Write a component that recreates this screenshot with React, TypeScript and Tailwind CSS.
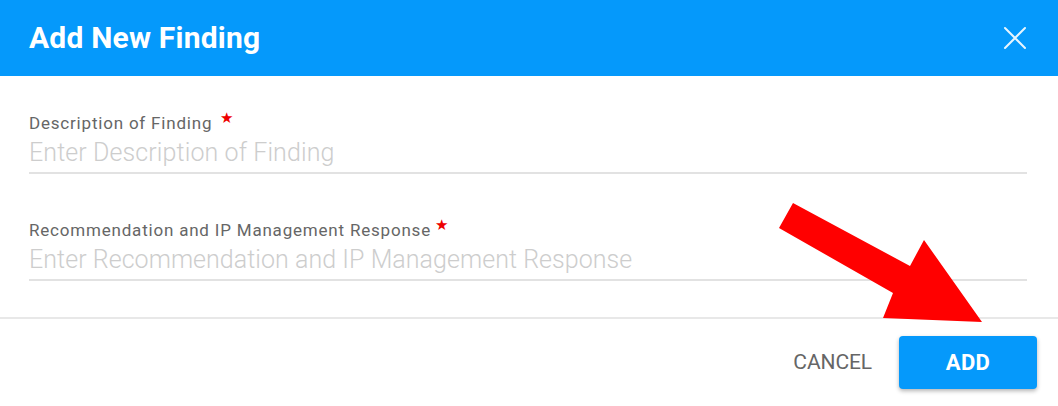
import React from "react";

export default function App() {
  return (
    <div className="relative w-[1058px] h-[406px] bg-white overflow-hidden" style={{ fontFamily: "Roboto, 'Liberation Sans', sans-serif" }}>
      <div className="h-[76px] bg-[#0599fb] flex items-center justify-between pl-[29px] pr-[31px]">
        <h1 className="text-[30px] font-bold text-white tracking-[0.2px] leading-none">Add New Finding</h1>
        <svg width="24" height="24" viewBox="0 0 24 24" className="text-white/90">
          <path d="M2 2 L22 22 M22 2 L2 22" stroke="currentColor" strokeWidth="2" strokeLinecap="round" />
        </svg>
      </div>
      <div className="pl-[29px] pr-[31px]">
        <div className="pt-[37px]">
          <div className="flex items-start h-[20px]">
            <span className="text-[17px] leading-[20px] text-[#666] tracking-[0.8px]">Description of Finding</span>
            <span className="ml-[8px] -mt-[2px] text-[#e00] text-[15px] leading-[14px]">★</span>
          </div>
          <div className="pt-[5px] pb-[4px] border-b-2 border-[#e2e2e2]">
            <div className="text-[25px] leading-[30px] font-light text-[#cdcdcd] tracking-[0.1px]">Enter Description of Finding</div>
          </div>
        </div>
        <div className="pt-[46px]">
          <div className="flex items-start h-[20px]">
            <span className="text-[17px] leading-[20px] text-[#666] tracking-[0.8px]">Recommendation and IP Management Response</span>
            <span className="ml-[4px] -mt-[2px] text-[#e00] text-[15px] leading-[14px]">★</span>
          </div>
          <div className="pt-[5px] pb-[4px] border-b-2 border-[#e2e2e2]">
            <div className="text-[25px] leading-[30px] font-light text-[#cdcdcd] tracking-[0.05px]">Enter Recommendation and IP Management Response</div>
          </div>
        </div>
      </div>
      <div className="mt-[36px] border-t-2 border-[#e8e8e8] flex justify-end items-center pt-[17px] pr-[21px] gap-[27px]">
        <span className="text-[21px] text-[#666] tracking-[-0.1px]">CANCEL</span>
        <button className="w-[138px] h-[53px] rounded-[4px] bg-[#0599fb] text-white font-bold text-[22px] tracking-[0.3px] shadow-[0_2px_4px_rgba(0,0,0,0.3)]">ADD</button>
      </div>
      <svg className="absolute left-0 top-0 pointer-events-none" width="1058" height="406">
        <polygon points="793,203 910,266 924,240 982,322 883,318 893,293 779,228" fill="#ff0000" />
      </svg>
    </div>
  );
}
